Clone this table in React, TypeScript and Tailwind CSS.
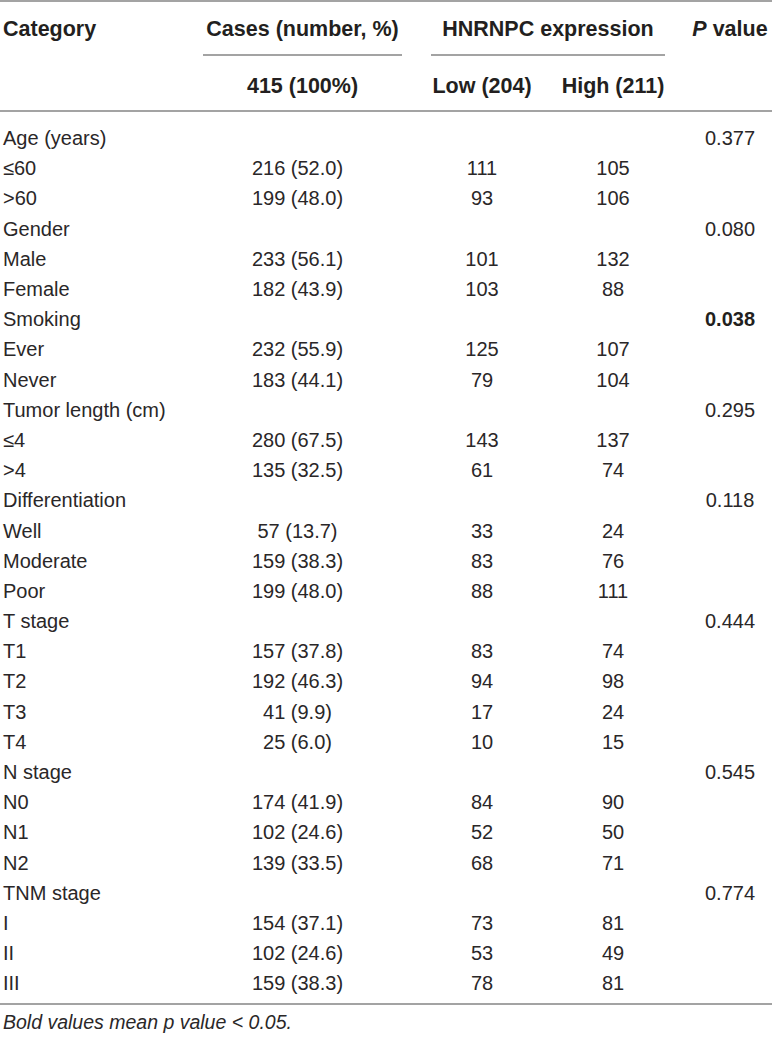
type Row = {
  label: string;
  cases?: string;
  low?: string;
  high?: string;
  p?: string;
  bold?: boolean;
};

const rows: Row[] = [
  { label: "Age (years)", p: "0.377" },
  { label: "≤60", cases: "216 (52.0)", low: "111", high: "105" },
  { label: ">60", cases: "199 (48.0)", low: "93", high: "106" },
  { label: "Gender", p: "0.080" },
  { label: "Male", cases: "233 (56.1)", low: "101", high: "132" },
  { label: "Female", cases: "182 (43.9)", low: "103", high: "88" },
  { label: "Smoking", p: "0.038", bold: true },
  { label: "Ever", cases: "232 (55.9)", low: "125", high: "107" },
  { label: "Never", cases: "183 (44.1)", low: "79", high: "104" },
  { label: "Tumor length (cm)", p: "0.295" },
  { label: "≤4", cases: "280 (67.5)", low: "143", high: "137" },
  { label: ">4", cases: "135 (32.5)", low: "61", high: "74" },
  { label: "Differentiation", p: "0.118" },
  { label: "Well", cases: "57 (13.7)", low: "33", high: "24" },
  { label: "Moderate", cases: "159 (38.3)", low: "83", high: "76" },
  { label: "Poor", cases: "199 (48.0)", low: "88", high: "111" },
  { label: "T stage", p: "0.444" },
  { label: "T1", cases: "157 (37.8)", low: "83", high: "74" },
  { label: "T2", cases: "192 (46.3)", low: "94", high: "98" },
  { label: "T3", cases: "41 (9.9)", low: "17", high: "24" },
  { label: "T4", cases: "25 (6.0)", low: "10", high: "15" },
  { label: "N stage", p: "0.545" },
  { label: "N0", cases: "174 (41.9)", low: "84", high: "90" },
  { label: "N1", cases: "102 (24.6)", low: "52", high: "50" },
  { label: "N2", cases: "139 (33.5)", low: "68", high: "71" },
  { label: "TNM stage", p: "0.774" },
  { label: "I", cases: "154 (37.1)", low: "73", high: "81" },
  { label: "II", cases: "102 (24.6)", low: "53", high: "49" },
  { label: "III", cases: "159 (38.3)", low: "78", high: "81" },
];

const cols = "grid grid-cols-[203px_199px_29px_102px_28px_104px_23px_84px]";

export default function App() {
  return (
    <div className="w-[772px] bg-white font-['Liberation_Sans',Arial,Helvetica,sans-serif] text-[#231f20]">
      <div className="h-[2px] bg-[#a3a3a3]" />

      {/* header */}
      <div className={`${cols} h-[54px] items-center text-[21.5px] font-bold`}>
        <div className="pl-[3px]">Category</div>
        <div className="flex h-full items-center justify-center border-b-2 border-[#a3a3a3] pt-[2px] whitespace-nowrap">
          Cases (number, %)
        </div>
        <div />
        <div className="col-span-3 flex h-full items-center justify-center border-b-2 border-[#a3a3a3] pt-[2px]">
          HNRNPC expression
        </div>
        <div />
        <div className="text-center whitespace-nowrap">
          <span className="italic">P</span> value
        </div>
      </div>
      <div className={`${cols} h-[54px] items-center pt-[6px] text-[21.5px] font-bold`}>
        <div />
        <div className="text-center">415 (100%)</div>
        <div />
        <div className="text-center whitespace-nowrap">Low (204)</div>
        <div />
        <div className="text-center whitespace-nowrap">High (211)</div>
        <div />
        <div />
      </div>
      <div className="h-[2px] bg-[#a3a3a3]" />

      {/* body */}
      <div className="pt-[11px] pb-[5px] text-[20px] text-[#2a2728]">
        {rows.map((r) => (
          <div key={r.label} className={`${cols} h-[30.2px] items-center`}>
            <div className="pl-[3px]">{r.label}</div>
            <div className="pr-[10px] text-center">{r.cases}</div>
            <div />
            <div className="text-center">{r.low}</div>
            <div />
            <div className="text-center">{r.high}</div>
            <div />
            <div className={r.bold ? "text-center font-bold text-[#231f20]" : "text-center"}>{r.p}</div>
          </div>
        ))}
      </div>
      <div className="h-[2px] bg-[#a3a3a3]" />

      <p className="pl-[3px] pt-[5px] text-[19.5px] italic leading-[24px] text-[#2a2728]">
        Bold values mean p value &lt; 0.05.
      </p>
    </div>
  );
}
